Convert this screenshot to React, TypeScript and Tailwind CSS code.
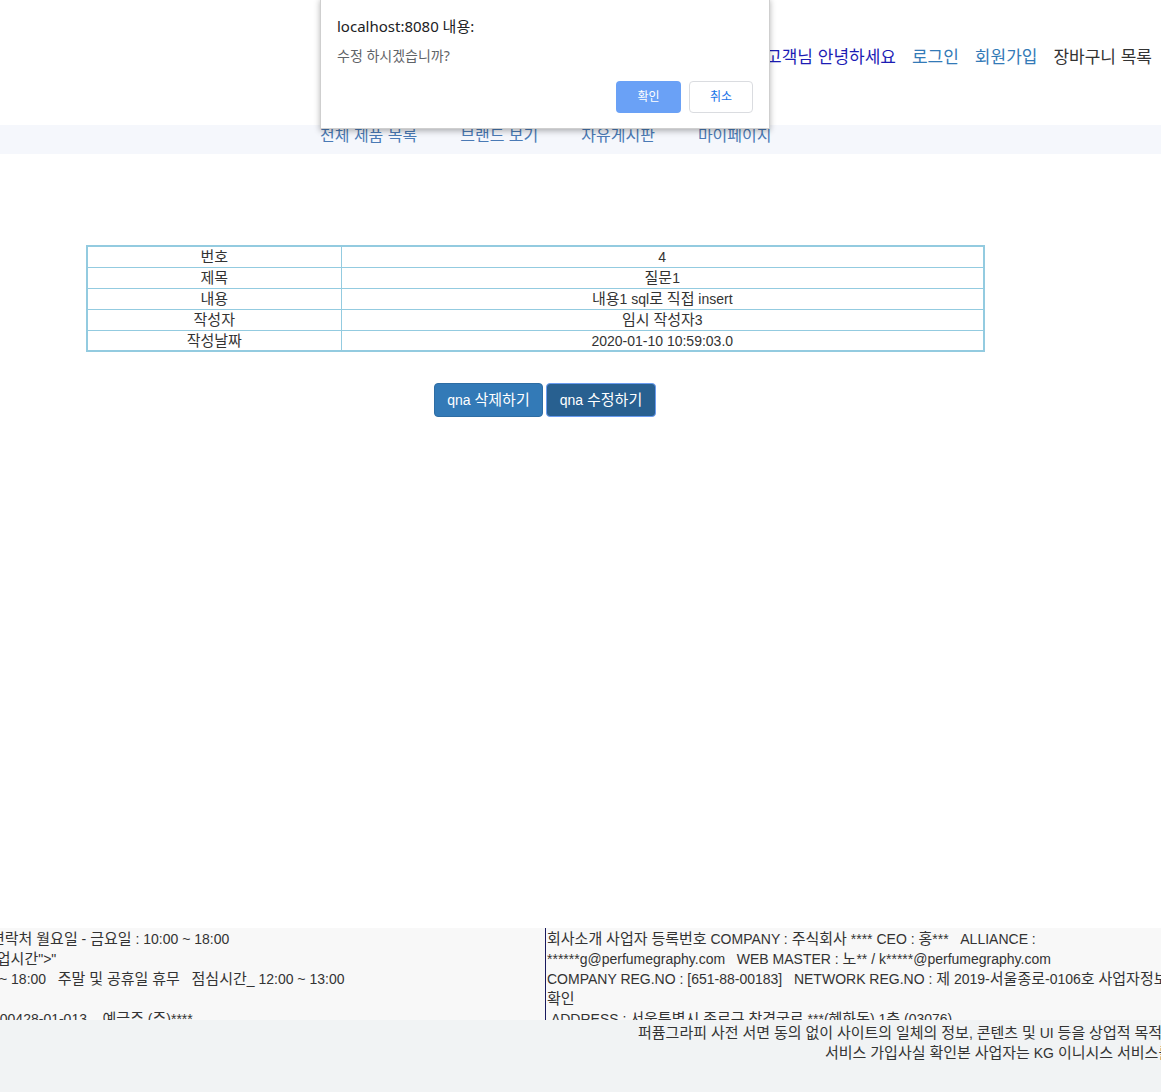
import React from "react";

const font = "font-['Liberation_Sans','Noto_Sans_CJK_KR',sans-serif]";

// hangul runs come out a bit wider in the original, bump them up a size
const ko = (text: string, cls: string) =>
  text.split(/([가-힣]+)/).map((part, i) =>
    /[가-힣]/.test(part) ? (
      <span key={i} className={cls}>
        {part}
      </span>
    ) : (
      part
    )
  );

const rows: [string, string][] = [
  ["번호", "4"],
  ["제목", "질문1"],
  ["내용", "내용1 sql로 직접 insert"],
  ["작성자", "임시 작성자3"],
  ["작성날짜", "2020-01-10 10:59:03.0"],
];

const ConfirmDialog = () => {
  return (
    <div className="absolute left-[320px] top-[-2px] w-[450px] h-[131px] bg-white border border-[#cfcfcf] shadow-[0_2px_6px_rgba(0,0,0,0.3)] font-['Noto_Sans','Noto_Sans_CJK_KR',sans-serif]">
      <p className="absolute left-[16px] top-[17px] text-[15px] leading-[20px] text-[#202124]">
        localhost:8080 내용:
      </p>
      <p className="absolute left-[16px] top-[48px] text-[14px] leading-[18px] text-[#5f6368]">
        수정 하시겠습니까?
      </p>
      <div className="absolute right-[16px] top-[82px] flex gap-[8px]">
        <button className="w-[65px] h-[32px] rounded-[4px] bg-[#6aa1f6] text-white text-[12px]">
          확인
        </button>
        <button className="w-[64px] h-[32px] rounded-[4px] bg-white border border-[#dadce0] text-[#1a73e8] text-[12px]">
          취소
        </button>
      </div>
    </div>
  );
};

const App = () => {
  return (
    <div className={`relative w-full h-[1092px] overflow-hidden bg-white text-[#333] ${font}`}>
      {/* header */}
      <header className="h-[125px] flex justify-end items-start pt-[47px] pr-[9px] text-[17px] leading-[22px] gap-[16px]">
        <span className="text-[#1c1cb4]">고객님 안녕하세요</span>
        <a className="text-[#337ab7]">로그인</a>
        <a className="text-[#337ab7]">회원가입</a>
        <span className="text-[#333]">장바구니 목록</span>
      </header>

      {/* nav */}
      <nav className="h-[29px] bg-[#f5f7fc] flex items-start pl-[320px] gap-[43px] text-[16px] leading-[22px] text-[#4a7ab5]">
        <a>전체 제품 목록</a>
        <a>브랜드 보기</a>
        <a>자유게시판</a>
        <a>마이페이지</a>
      </nav>

      {/* qna detail */}
      <main className="pt-[91px] h-[774px]">
        <table className="ml-[86px] w-[899px] border-collapse border-2 border-[#93cbe0] text-[14px] text-[#333]">
          <tbody>
            {rows.map(([k, v]) => (
              <tr key={k}>
                <td className="w-[254px] h-[21px] p-0 pt-px leading-[18px] text-center border border-[#93cbe0]">
                  {ko(k, "text-[15px]")}
                </td>
                <td className="h-[21px] p-0 pt-px leading-[18px] text-center border border-[#93cbe0]">
                  {ko(v, "text-[15px]")}
                </td>
              </tr>
            ))}
          </tbody>
        </table>

        <div className="flex gap-[3px] ml-[434px] mt-[31px]">
          <button className="w-[109px] h-[34px] rounded-[4px] bg-[#337ab7] border border-[#2e6da4] text-white text-[14px]">
            {ko("qna 삭제하기", "text-[15px]")}
          </button>
          <button className="w-[110px] h-[34px] rounded-[4px] bg-[#286090] border border-[#6a9cf0] text-white text-[14px]">
            {ko("qna 수정하기", "text-[15px]")}
          </button>
        </div>
      </main>

      {/* footer */}
      <footer className="text-[14px] leading-[20px] text-[#333]">
        <div className="flex h-[92px] bg-[#f8f8f8] overflow-hidden">
          <div className="w-[545px] shrink-0 overflow-hidden whitespace-nowrap pt-px">
            <p className="-ml-[9px]">{ko("연락처 월요일 - 금요일 : 10:00 ~ 18:00", "text-[15px]")}</p>
            <p className="-ml-[17px]">{ko('영업시간">"', "text-[15px]")}</p>
            <p className="-ml-[1px]">
              {ko("~ 18:00 \u00a0\u00a0주말 및 공휴일 휴무 \u00a0\u00a0점심시간_ 12:00 ~ 13:00", "text-[15px]")}
            </p>
            <p>&nbsp;</p>
            <p className="-ml-[8px]">{ko("100428-01-013 \u00a0\u00a0\u00a0예금주 (주)****", "text-[15px]")}</p>
          </div>
          <div className="w-[625px] shrink-0 border-l border-[#1a1a5e] pl-[1px] pt-px">
            <p>{ko("회사소개 사업자 등록번호 COMPANY : 주식회사 **** CEO : 홍*** \u00a0\u00a0ALLIANCE :", "text-[15px]")}</p>
            <p>{ko("******g@perfumegraphy.com \u00a0\u00a0WEB MASTER : 노** / k*****@perfumegraphy.com", "text-[15px]")}</p>
            <p className="whitespace-nowrap">
              {ko("COMPANY REG.NO : [651-88-00183] \u00a0\u00a0NETWORK REG.NO : 제 2019-서울종로-0106호 사업자정보", "text-[15px]")}
            </p>
            <p>{ko("확인", "text-[15px]")}</p>
            <p>{ko("\u00a0ADDRESS : 서울특별시 종로구 창경궁로 ***(혜화동) 1층 (03076)", "text-[15px]")}</p>
          </div>
        </div>
        <div className="h-[72px] bg-[#f1f3f4] pt-[3px] whitespace-nowrap">
          <p className="pl-[638px]">
            {ko("퍼퓸그라피 사전 서면 동의 없이 사이트의 일체의 정보, 콘텐츠 및 UI 등을 상업적 목적으로 전재, 전송, 스크랩 등 무단 사용할 수 없습니다.", "text-[15px]")}
          </p>
          <p className="pl-[825px]">
            {ko("서비스 가입사실 확인본 사업자는 KG 이니시스 서비스를 이용하고 있습니다.", "text-[15px]")}
          </p>
        </div>
      </footer>

      <ConfirmDialog />
    </div>
  );
};

export default App;
